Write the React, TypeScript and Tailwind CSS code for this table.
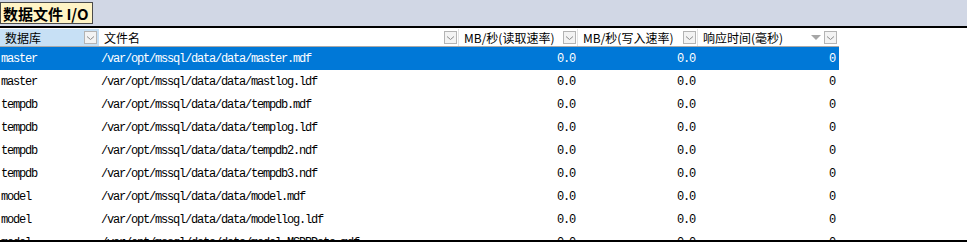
import React from 'react'

const rows = [
  ['master', '/var/opt/mssql/data/data/master.mdf'],
  ['master', '/var/opt/mssql/data/data/mastlog.ldf'],
  ['tempdb', '/var/opt/mssql/data/data/tempdb.mdf'],
  ['tempdb', '/var/opt/mssql/data/data/templog.ldf'],
  ['tempdb', '/var/opt/mssql/data/data/tempdb2.ndf'],
  ['tempdb', '/var/opt/mssql/data/data/tempdb3.ndf'],
  ['model', '/var/opt/mssql/data/data/model.mdf'],
  ['model', '/var/opt/mssql/data/data/modellog.ldf'],
  ['model', '/var/opt/mssql/data/data/model_MSDBData.mdf'],
]

function Drop() {
  return (
    <span className="flex h-[13px] w-[13px] shrink-0 items-center justify-center border border-[#b4b4b4] bg-[#f3f3f3]">
      <svg width="9" height="6" viewBox="0 0 9 6">
        <path d="M1 1.5 L4.5 4.5 L8 1.5" fill="none" stroke="#8c8c8c" strokeWidth="1" />
      </svg>
    </span>
  )
}

const mono = { fontFamily: '"Liberation Mono", "DejaVu Sans Mono", monospace' }
const cjk = { fontFamily: '"Noto Sans CJK SC", "Noto Sans", sans-serif' }

export default function App() {
  return (
    <div className="h-[242px] w-[967px] overflow-hidden bg-white">
      {/* title band */}
      <div className="flex h-[26px] items-start bg-[#d1d7e5] pt-[2px]">
        <div
          className="flex h-[22px] w-[93px] items-center border border-[#4a4a4a] bg-[#fff4c6] pl-[2px] text-[15px] font-bold leading-none text-black"
          style={cjk}
        >
          数据文件 I/O
        </div>
      </div>
      <div className="h-[2px] bg-black" />

      {/* header */}
      <div className="flex h-[18px] w-[839px] pt-[1px] text-[12px] leading-none text-black" style={cjk}>
        <div className="flex w-[99px] items-center justify-between bg-[#c7e0f5] pl-[5px] pr-[2px]">
          <span>数据库</span>
          <Drop />
        </div>
        <div className="flex w-[360px] items-center justify-between border-r border-[#e3e3e3] pl-[5px] pr-[1px]">
          <span>文件名</span>
          <Drop />
        </div>
        <div className="flex w-[119px] items-center justify-between border-r border-[#e3e3e3] pl-[5px] pr-[1px]">
          <span>MB/秒(读取速率)</span>
          <Drop />
        </div>
        <div className="flex w-[120px] items-center justify-between border-r border-[#e3e3e3] pl-[5px] pr-[1px]">
          <span>MB/秒(写入速率)</span>
          <Drop />
        </div>
        <div className="flex w-[141px] items-center pl-[5px] pr-[2px]">
          <span className="flex-1">响应时间(毫秒)</span>
          <svg width="10" height="6" viewBox="0 0 10 6" className="mr-[3px]">
            <path d="M0 0 H10 L5 5 Z" fill="#a6a6a6" />
          </svg>
          <Drop />
        </div>
      </div>
      <div className="h-[1px] w-[839px] bg-[#a9a9a9]" />

      {/* body */}
      <div className="h-[193px] overflow-hidden">
        {rows.map(([db, file], i) => (
          <div
            key={i}
            className={`flex h-[23px] w-[839px] items-center pt-[1px] text-[12px] tracking-[-1.2px] ${
              i === 0 ? 'bg-[#0078d7] text-white' : 'text-black'
            }`}
            style={mono}
          >
            <div className="w-[99px] pl-[1px]">{db}</div>
            <div className="w-[360px] pl-[2px]">{file}</div>
            <div className="w-[119px] pr-[3px] text-right">0.0</div>
            <div className="w-[120px] pr-[3px] text-right">0.0</div>
            <div className="w-[141px] pr-[4px] text-right">0</div>
          </div>
        ))}
      </div>
      <div className="h-[2px] bg-black" />
    </div>
  )
}
